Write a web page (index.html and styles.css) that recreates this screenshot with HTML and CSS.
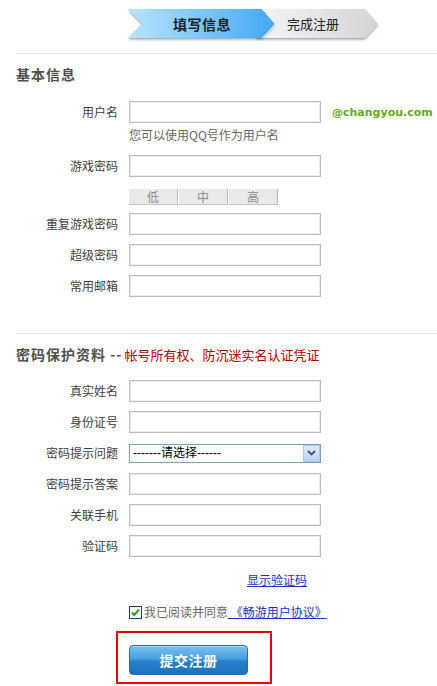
FILE: index.html
```html
<!DOCTYPE html>
<html lang="zh-CN">
<head>
<meta charset="utf-8">
<title>注册</title>
<link rel="stylesheet" href="styles.css">
</head>
<body>
<div class="page">
  <div class="steps-wrap">
    <div class="steps">
      <svg class="steps-bg" width="252" height="34" viewBox="0 0 252 34">
        <defs>
          <linearGradient id="gBlue" x1="0" y1="0" x2="1" y2="0">
            <stop offset="0" stop-color="#b8e4fd"/>
            <stop offset="1" stop-color="#43a8f5"/>
          </linearGradient>
          <linearGradient id="gGray" x1="0" y1="0" x2="1" y2="0">
            <stop offset="0" stop-color="#f6f6f6"/>
            <stop offset="1" stop-color="#d4d4d4"/>
          </linearGradient>
          <filter id="sh" x="-5%" y="-20%" width="110%" height="150%">
            <feDropShadow dx="0" dy="1.5" stdDeviation="0.8" flood-color="#4a5560" flood-opacity="0.55"/>
          </filter>
        </defs>
        <polygon points="128,1 237,1 250,16 237,30 128,30" fill="url(#gGray)" filter="url(#sh)"/>
        <polygon points="0,1 134,1 147,16 134,30 0,30 14,15.5" fill="url(#gBlue)" filter="url(#sh)"/>
        <polyline points="134.5,1 147.5,16 134.5,30" fill="none" stroke="#ffffff" stroke-width="1"/>
      </svg>
      <div class="steps-labels">
        <span class="step-on">填写信息</span>
        <span class="step-off">完成注册</span>
      </div>
    </div>
  </div>

  <div class="divider"></div>
  <h2 class="sec-title">基本信息</h2>

  <div class="row first">
    <label class="lbl">用户名</label>
    <input class="field" type="text">
    <span class="domain">@changyou.com</span>
  </div>
  <div class="hint">您可以使用QQ号作为用户名</div>

  <div class="row r-pwd">
    <label class="lbl">游戏密码</label>
    <input class="field" type="password">
  </div>
  <div class="strength">
    <span class="cell">低</span>
    <span class="cell">中</span>
    <span class="cell">高</span>
  </div>

  <div class="row r-after-strength">
    <label class="lbl">重复游戏密码</label>
    <input class="field" type="password">
  </div>
  <div class="row">
    <label class="lbl">超级密码</label>
    <input class="field" type="password">
  </div>
  <div class="row">
    <label class="lbl">常用邮箱</label>
    <input class="field" type="text">
  </div>

  <div class="divider second"></div>
  <h2 class="sec-title">密码保护资料 --<span class="sec-note">帐号所有权、防沉迷实名认证凭证</span></h2>

  <div class="row first2">
    <label class="lbl">真实姓名</label>
    <input class="field" type="text">
  </div>
  <div class="row">
    <label class="lbl">身份证号</label>
    <input class="field" type="text">
  </div>
  <div class="row">
    <label class="lbl">密码提示问题</label>
    <div class="select-wrap">
      <select class="select">
        <option>-------请选择------</option>
      </select>
      <span class="select-btn">
        <svg width="9" height="6" viewBox="0 0 9 6"><polyline points="1,1 4.5,4.5 8,1" fill="none" stroke="#3f5478" stroke-width="1.8"/></svg>
      </span>
    </div>
  </div>
  <div class="row">
    <label class="lbl">密码提示答案</label>
    <input class="field" type="text">
  </div>
  <div class="row">
    <label class="lbl">关联手机</label>
    <input class="field" type="text">
  </div>
  <div class="row">
    <label class="lbl">验证码</label>
    <input class="field" type="text">
  </div>

  <div class="captcha-line"><a class="link" href="#">显示验证码</a></div>

  <div class="agree"><span class="chk"><svg width="13" height="13" viewBox="0 0 13 13"><rect x="0.5" y="0.5" width="12" height="12" fill="#f4f6f8" stroke="#1d3c5e"/><polyline points="3,6.5 5.3,9 10,3.6" fill="none" stroke="#2c9b2c" stroke-width="2"/></svg></span><span class="agree-text">我已阅读并同意</span><a class="link agree-link" href="#">&nbsp;《畅游用户协议》</a></div>

  <div class="submit-box">
    <button class="submit" type="button">提交注册</button>
  </div>
</div>
</body>
</html>
```

FILE: styles.css
```css
html, body {
  margin: 0;
  padding: 0;
  background: #ffffff;
}
body {
  font-family: "Noto Sans CJK SC", "Liberation Sans", sans-serif;
  font-size: 12px;
  color: #333333;
}
.page {
  width: 437px;
  height: 686px;
  overflow: hidden;
}
.steps-wrap {
  height: 53px;
  padding-top: 8px;
  box-sizing: border-box;
  padding-left: 128px;
}
.steps {
  position: relative;
  width: 252px;
  height: 34px;
}
.steps-bg {
  display: block;
}
.steps-labels {
  position: absolute;
  left: 0;
  top: 0;
  width: 252px;
  height: 31px;
  display: flex;
  align-items: center;
}
.step-on {
  width: 148px;
  text-align: center;
  font-weight: bold;
  font-size: 14px;
  color: #1c2126;
  letter-spacing: 0.5px;
}
.step-off {
  padding-left: 11px;
  font-size: 13px;
  color: #222222;
}
.divider {
  margin-left: 16px;
  height: 1px;
  background: #e3e3e3;
}
.divider.second {
  margin-top: 36px;
}
.sec-title {
  margin: 10px 0 0 16px;
  height: 20px;
  line-height: 20px;
  font-size: 14px;
  font-weight: bold;
  color: #505050;
  letter-spacing: 1px;
}
.sec-note {
  font-weight: normal;
  font-size: 13px;
  color: #b30000;
  letter-spacing: 0;
  margin-left: 2px;
}
.row {
  display: flex;
  align-items: center;
  height: 22px;
  margin-top: 9px;
}
.row.first { margin-top: 17px; }
.row.first2 { margin-top: 16px; }
.row.r-pwd { margin-top: 12px; }
.row.r-after-strength { margin-top: 8px; }
.lbl {
  width: 129px;
  box-sizing: border-box;
  padding-right: 11px;
  text-align: right;
  color: #404040;
  line-height: 16px;
}
.field {
  width: 192px;
  height: 22px;
  box-sizing: border-box;
  margin: 0;
  padding: 0 3px;
  border: 1px solid #bcbcbc;
  box-shadow: inset 0 0 0 1px #ececec;
  background: #ffffff;
  outline: none;
  font-size: 12px;
}
.domain {
  margin-left: 11px;
  font-family: "DejaVu Sans", "Liberation Sans", sans-serif;
  font-weight: bold;
  font-size: 11px;
  color: #66aa11;
}
.hint {
  margin-top: 4px;
  padding-left: 129px;
  line-height: 16px;
  color: #666666;
}
.strength {
  display: flex;
  margin: 12px 0 0 129px;
  height: 16px;
  gap: 1px;
}
.cell {
  width: 49px;
  height: 16px;
  box-sizing: border-box;
  background: #e9e9e9;
  border-right: 1px solid #b9b9b9;
  border-bottom: 1px solid #c4c4c4;
  text-align: center;
  line-height: 15px;
  color: #8c8c8c;
}
.select-wrap {
  position: relative;
  width: 192px;
  height: 19px;
}
.select {
  display: block;
  width: 192px;
  height: 19px;
  margin: 0;
  padding: 0 0 0 3px;
  box-sizing: border-box;
  border: 1px solid #7f9db9;
  border-radius: 0;
  background: #ffffff;
  -webkit-appearance: none;
  appearance: none;
  font-family: "Liberation Sans", "Noto Sans CJK SC", sans-serif;
  font-size: 12px;
  color: #000000;
  line-height: 17px;
  outline: none;
}
.select-btn {
  position: absolute;
  right: 1px;
  top: 1px;
  width: 17px;
  height: 17px;
  box-sizing: border-box;
  border: 1px solid #b6c8ea;
  background: linear-gradient(#e3ebfb, #bccff3);
  display: flex;
  align-items: center;
  justify-content: center;
  pointer-events: none;
}
.select-btn svg { display: block; }
.captcha-line {
  margin-top: 15px;
  padding-left: 247px;
  line-height: 16px;
}
.link {
  color: #1433c8;
  text-decoration: underline;
}
.agree {
  display: flex;
  align-items: center;
  margin-top: 16px;
  padding-left: 129px;
  height: 16px;
  line-height: 16px;
}
.chk {
  display: block;
  flex: none;
  width: 13px;
  height: 13px;
  margin-right: 2px;
}
.chk svg { display: block; }
.agree-text {
  color: #666666;
  white-space: nowrap;
}
.agree-link {
  white-space: nowrap;
}
.submit-box {
  margin: 11px 0 0 116px;
  width: 156px;
  height: 53px;
  box-sizing: border-box;
  border: 2px solid #ea0000;
  padding: 12px 0 0 11px;
}
.submit {
  display: block;
  width: 119px;
  height: 30px;
  margin: 0;
  padding: 0;
  border: 1px solid #2a6ca8;
  border-radius: 4px;
  background: linear-gradient(#79c0ef 0%, #4a9fe0 45%, #2580cb 55%, #1e72bd 100%);
  box-shadow: inset 0 1px 0 rgba(255,255,255,0.45);
  color: #ffffff;
  font-family: "Noto Sans CJK SC", sans-serif;
  font-weight: bold;
  font-size: 14px;
  letter-spacing: 0.5px;
}
```
